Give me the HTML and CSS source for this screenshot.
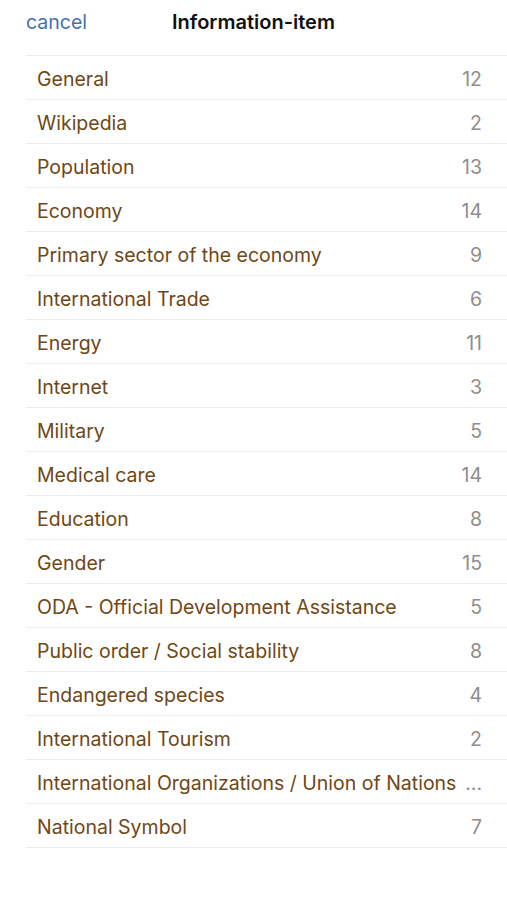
FILE: index.html
```html
<!DOCTYPE html>
<html>
<head>
<meta charset="utf-8">
<link rel="stylesheet" href="styles.css">
</head>
<body>
<header class="bar">
  <span class="cancel">cancel</span>
  <span class="title">Information-item</span>
  <span></span>
</header>
<ul class="list">
  <li class="row"><span class="label">General</span><span class="count">12</span></li>
  <li class="row"><span class="label">Wikipedia</span><span class="count">2</span></li>
  <li class="row"><span class="label">Population</span><span class="count">13</span></li>
  <li class="row"><span class="label">Economy</span><span class="count">14</span></li>
  <li class="row"><span class="label">Primary sector of the economy</span><span class="count">9</span></li>
  <li class="row"><span class="label">International Trade</span><span class="count">6</span></li>
  <li class="row"><span class="label">Energy</span><span class="count">11</span></li>
  <li class="row"><span class="label">Internet</span><span class="count">3</span></li>
  <li class="row"><span class="label">Military</span><span class="count">5</span></li>
  <li class="row"><span class="label">Medical care</span><span class="count">14</span></li>
  <li class="row"><span class="label">Education</span><span class="count">8</span></li>
  <li class="row"><span class="label">Gender</span><span class="count">15</span></li>
  <li class="row"><span class="label">ODA - Official Development Assistance</span><span class="count">5</span></li>
  <li class="row"><span class="label">Public order / Social stability</span><span class="count">8</span></li>
  <li class="row"><span class="label">Endangered species</span><span class="count">4</span></li>
  <li class="row"><span class="label">International Tourism</span><span class="count">2</span></li>
  <li class="row"><span class="label">International Organizations / Union of Nations</span><span class="count">...</span></li>
  <li class="row"><span class="label">National Symbol</span><span class="count">7</span></li>
</ul>
</body>
</html>
```

FILE: styles.css
```css
* { box-sizing: border-box; }
html, body { margin: 0; padding: 0; background: #fff; }
body {
  font-family: Inter, "Noto Sans", "Liberation Sans", sans-serif;
  width: 507px;
  height: 900px;
  overflow: hidden;
}
.bar {
  display: grid;
  grid-template-columns: 1fr auto 1fr;
  align-items: center;
  height: 43px;
  padding: 1px 0 0 26px;
  margin-bottom: 12px;
}
.cancel {
  color: #4473a8;
  font-size: 19.5px;
  justify-self: start;
}
.title {
  color: #111;
  font-size: 20px;
  font-weight: 600;
  padding-right: 26px;
}
.list {
  list-style: none;
  margin: 0 0 0 26px;
  padding: 0;
  border-top: 1px solid #ececec;
}
.row {
  display: flex;
  align-items: center;
  justify-content: space-between;
  height: 44px;
  padding: 2px 25px 0 11px;
  border-bottom: 1px solid #ececec;
  font-size: 19.5px;
}
.label {
  color: #6e4716;
  white-space: nowrap;
}
.count {
  color: #8e8e8e;
}
```
